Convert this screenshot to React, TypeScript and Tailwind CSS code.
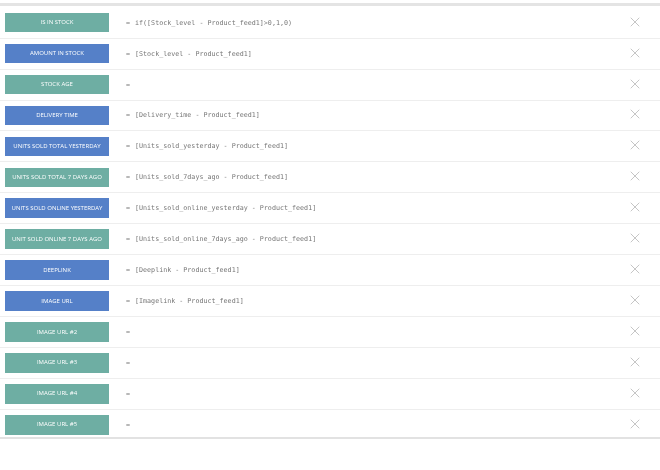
import React from 'react';
import { X } from 'lucide-react';

type Row = {
  label: string;
  formula: string;
  color: 'green' | 'blue';
};

const ROWS: Row[] = [
  { label: 'Is in stock', formula: 'if([Stock_level - Product_feed1]>0,1,0)', color: 'green' },
  { label: 'Amount in stock', formula: '[Stock_level - Product_feed1]', color: 'blue' },
  { label: 'Stock age', formula: '', color: 'green' },
  { label: 'Delivery time', formula: '[Delivery_time - Product_feed1]', color: 'blue' },
  { label: 'Units sold total yesterday', formula: '[Units_sold_yesterday - Product_feed1]', color: 'blue' },
  { label: 'Units sold total 7 days ago', formula: '[Units_sold_7days_ago - Product_feed1]', color: 'green' },
  { label: 'Units sold online yesterday', formula: '[Units_sold_online_yesterday - Product_feed1]', color: 'blue' },
  { label: 'Unit sold online 7 days ago', formula: '[Units_sold_online_7days_ago - Product_feed1]', color: 'green' },
  { label: 'Deeplink', formula: '[Deeplink - Product_feed1]', color: 'blue' },
  { label: 'Image URL', formula: '[Imagelink - Product_feed1]', color: 'blue' },
  { label: 'Image URL #2', formula: '', color: 'green' },
  { label: 'Image URL #3', formula: '', color: 'green' },
  { label: 'Image URL #4', formula: '', color: 'green' },
  { label: 'Image URL #5', formula: '', color: 'green' },
];

const App = () => {
  return (
    <div className="w-[660px] h-[470px] bg-white overflow-hidden pt-[3px] blur-[0.6px] font-['Open_Sans',sans-serif]">
      <div className="h-[3px] mb-[1.7px] bg-[#e4e4e4]" />
      {ROWS.map((row) => (
        <div
          key={row.label}
          className="h-[30.95px] flex items-center pl-[5px] pr-[22px] border-b border-[#eeeeee] last:h-[29.4px] last:pt-[2.5px] last:border-b-[2px] last:border-[#e2e2e2]"
        >
          {/* Field name */}
          <div
            className={`w-[104px] h-[19.6px] shrink-0 flex items-center justify-center text-[6px] uppercase text-white whitespace-nowrap ${
              row.color === 'green' ? 'bg-[#6eaea3]' : 'bg-[#5580c8]'
            }`}
          >
            {row.label}
          </div>

          {/* Formula */}
          <div className="ml-[17px] flex-1 flex items-center text-[6.7px] text-[#777777] font-['DejaVu_Sans_Mono',monospace] whitespace-nowrap">
            <span className="w-[9px]">=</span>
            <span>{row.formula}</span>
          </div>

          <X size={16} strokeWidth={1.1} className="text-[#b0b0b0] shrink-0 mr-[-4.7px] mt-[-2px]" />
        </div>
      ))}
    </div>
  );
};

export default App;
